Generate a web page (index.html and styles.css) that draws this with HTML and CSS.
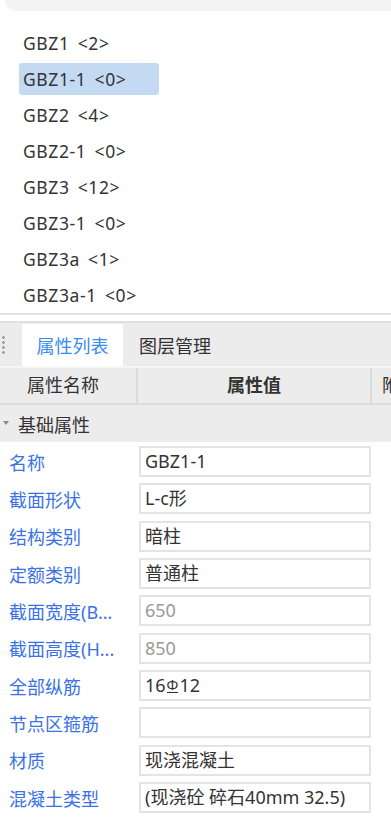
FILE: index.html
```html
<!DOCTYPE html>
<html lang="zh-CN">
<head>
<meta charset="UTF-8">
<meta name="viewport" content="width=device-width, initial-scale=1.0">
<title>构件列表</title>
<link rel="stylesheet" href="styles.css">
</head>
<body>
<div class="panel">
  <div class="search">
    <span class="search-text">搜索构件...</span>
  </div>

  <ul class="tree">
    <li class="item">GBZ1 &lt;2&gt;</li>
    <li class="item selected">GBZ1-1 &lt;0&gt;</li>
    <li class="item">GBZ2 &lt;4&gt;</li>
    <li class="item">GBZ2-1 &lt;0&gt;</li>
    <li class="item">GBZ3 &lt;12&gt;</li>
    <li class="item">GBZ3-1 &lt;0&gt;</li>
    <li class="item">GBZ3a &lt;1&gt;</li>
    <li class="item">GBZ3a-1 &lt;0&gt;</li>
  </ul>

  <div class="divider"></div>

  <div class="props">
    <div class="tabs">
      <span class="grip"></span>
      <div class="tab active">属性列表</div>
      <div class="tab">图层管理</div>
    </div>

    <div class="head">
      <div class="col-name">属性名称</div>
      <div class="col-value">属性值</div>
      <div class="col-extra">附</div>
    </div>

    <div class="group">
      <span class="caret"></span>
      <span>基础属性</span>
    </div>

    <div class="rows">
      <div class="row">
        <div class="label">名称</div>
        <div class="field">GBZ1-1</div>
      </div>
      <div class="row">
        <div class="label">截面形状</div>
        <div class="field">L-c形</div>
      </div>
      <div class="row">
        <div class="label">结构类别</div>
        <div class="field">暗柱</div>
      </div>
      <div class="row">
        <div class="label">定额类别</div>
        <div class="field">普通柱</div>
      </div>
      <div class="row">
        <div class="label">截面宽度(B...</div>
        <div class="field muted">650</div>
      </div>
      <div class="row">
        <div class="label">截面高度(H...</div>
        <div class="field muted">850</div>
      </div>
      <div class="row">
        <div class="label">全部纵筋</div>
        <div class="field">16<span class="rebar">Φ</span>12</div>
      </div>
      <div class="row">
        <div class="label">节点区箍筋</div>
        <div class="field"></div>
      </div>
      <div class="row">
        <div class="label">材质</div>
        <div class="field">现浇混凝土</div>
      </div>
      <div class="row">
        <div class="label">混凝土类型</div>
        <div class="field">(现浇砼 碎石40mm 32.5)</div>
      </div>
    </div>
  </div>
</div>
</body>
</html>
```

FILE: styles.css
```css
body {
  margin: 0;
  background: #fff;
  font-family: "Noto Sans", "Noto Sans CJK SC", sans-serif;
  color: #333;
  overflow: hidden;
}
.panel {
  width: 391px;
}
.search {
  height: 34px;
  margin: -23px 0 0 5px;
  background: #f3f3f3;
  border-radius: 0 0 0 12px;
  box-sizing: border-box;
  padding: 0 0 0 12px;
  line-height: 30px;
}
.search-text {
  font-size: 15px;
  color: #aaa;
}
.tree {
  list-style: none;
  margin: 16px 0 0 0;
  padding: 0;
}
.item {
  width: 140px;
  height: 32px;
  margin: 0 0 4px 19px;
  padding-left: 4px;
  box-sizing: border-box;
  font-size: 17.5px;
  line-height: 32px;
  letter-spacing: 0.6px;
  word-spacing: 3px;
  color: #333;
  white-space: nowrap;
  border-radius: 3px;
}
.item.selected {
  background: #c4daf2;
}
.divider {
  height: 2px;
  margin-top: -2px;
  background: #e2e2e2;
}
.props {
  margin-top: 6px;
  border-top: 2px solid #e0e0e0;
  background: #ececec;
}
.tabs {
  display: flex;
  align-items: stretch;
  height: 43px;
  border-bottom: 2px solid #f6f6f6;
}
.grip {
  width: 3px;
  margin: 12px 17px 0 2px;
  height: 19px;
  background: radial-gradient(circle, #9a9a9a 1.2px, transparent 1.5px) 0 0 / 3px 5px repeat-y;
}
.tab {
  display: flex;
  align-items: center;
  justify-content: center;
  font-size: 18px;
  color: #333;
  padding: 0 16px;
  white-space: nowrap;
}
.tab.active {
  width: 101px;
  padding: 0;
  box-sizing: border-box;
  margin-top: 1px;
  background: #fff;
  color: #3b8cf0;
}
.head {
  display: flex;
  height: 35px;
  border-bottom: 2px solid #dcdcdc;
  font-size: 18px;
  line-height: 35px;
}
.col-name {
  width: 138px;
  padding-left: 27px;
  box-sizing: border-box;
  border-right: 2px solid #dcdcdc;
}
.col-value {
  width: 232px;
  text-align: center;
  font-weight: bold;
  border-right: 2px solid #dcdcdc;
}
.col-extra {
  flex: 1;
  padding-left: 10px;
  overflow: hidden;
  white-space: nowrap;
}
.group {
  display: flex;
  align-items: center;
  height: 37px;
  font-size: 18px;
}
.caret {
  width: 0;
  height: 0;
  margin: 0 9px 2px 3px;
  border-left: 3px solid transparent;
  border-right: 3px solid transparent;
  border-top: 4px solid #8a8a8a;
}
.rows {
  background: #fff;
  padding-top: 1px;
  height: 400px;
}
.row {
  display: flex;
  align-items: center;
  height: 37.33px;
}
.label {
  width: 139px;
  padding-left: 9px;
  box-sizing: border-box;
  font-size: 18px;
  color: #3a72e6;
  white-space: nowrap;
  overflow: hidden;
}
.field {
  width: 232px;
  height: 31px;
  box-sizing: border-box;
  border: 2px solid #e4e4e4;
  padding-left: 4px;
  font-size: 18px;
  line-height: 27px;
  color: #333;
  white-space: nowrap;
}
.field.muted {
  color: #999;
}
.rebar {
  display: inline-block;
  font-size: 14px;
  line-height: 14px;
  vertical-align: 2px;
  border-bottom: 1px solid #333;
  margin: 0 1px;
}
```
